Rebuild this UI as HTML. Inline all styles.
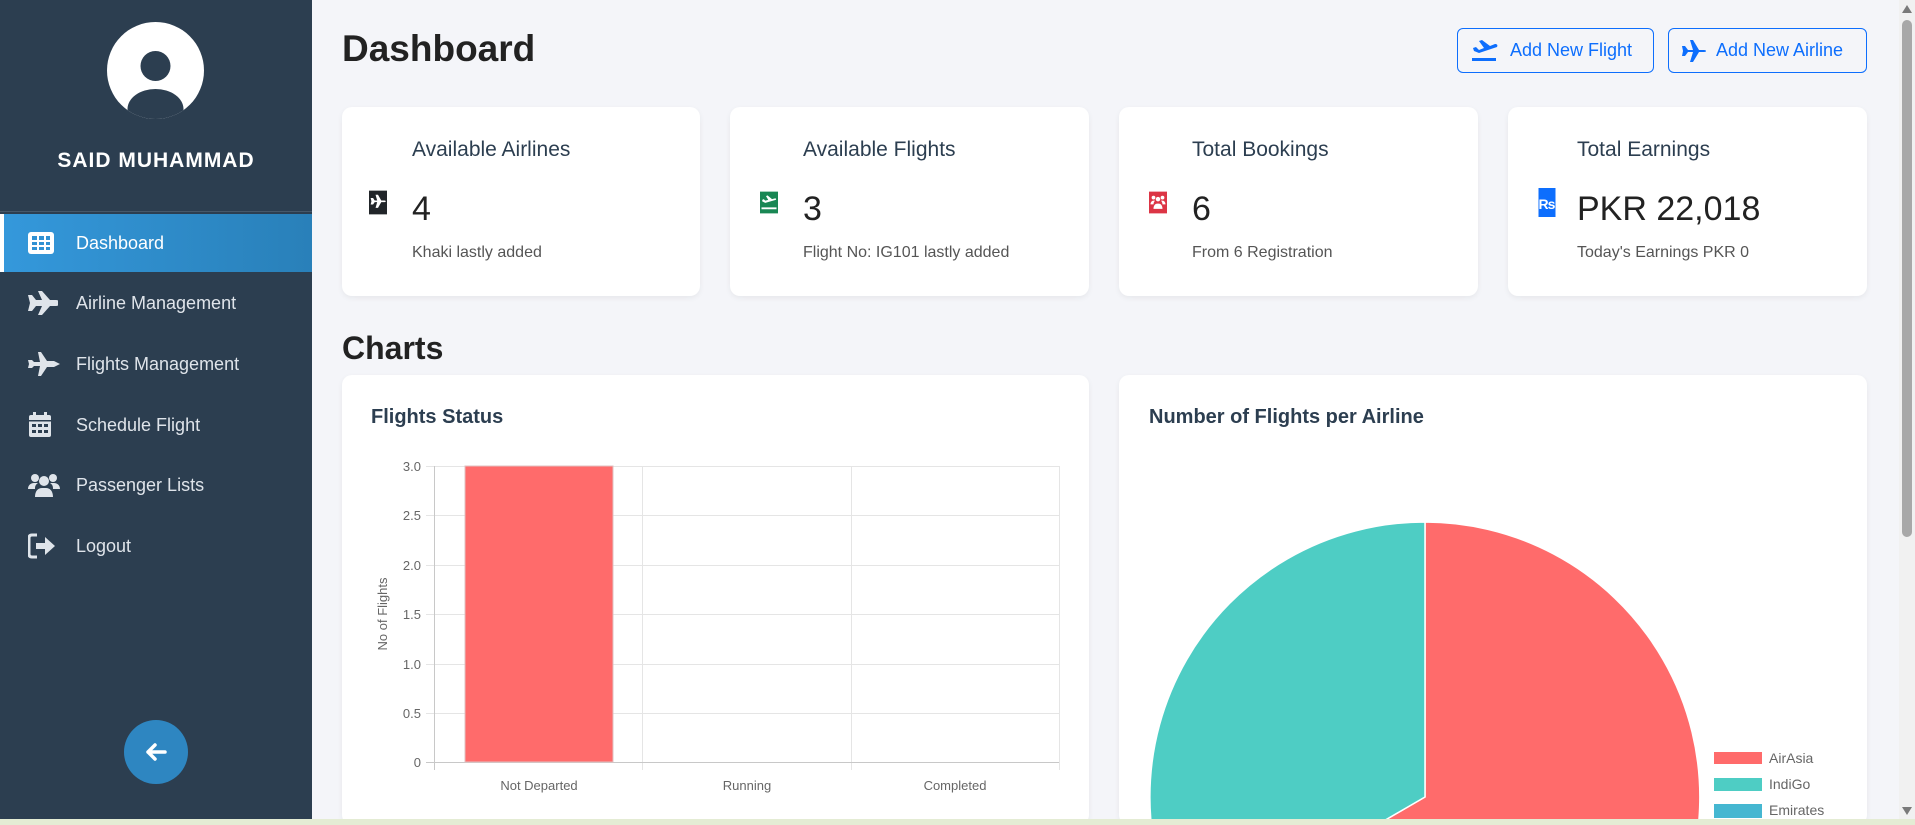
<!DOCTYPE html>
<html><head><meta charset="utf-8"><style>
*{box-sizing:border-box;margin:0;padding:0}
html,body{width:1915px;height:825px;overflow:hidden}
body{background:#f4f5f9;font-family:"Liberation Sans",sans-serif;position:relative}
.sb{position:absolute;left:0;top:0;width:312px;height:825px;background:#2c3e50}
.av{position:absolute;left:107px;top:22px;width:97px;height:97px;border-radius:50%;background:#fff;overflow:hidden}
.name{position:absolute;left:0;width:312px;top:149px;text-align:center;color:#fff;font-weight:bold;font-size:21px;letter-spacing:1px}
.sep{position:absolute;left:0;top:211px;width:312px;height:1px;background:#46586a}
.mi{position:absolute;left:0;width:312px;height:58px;color:#dfe4ea;font-size:18px;display:flex;align-items:center}
.mi svg{position:absolute;left:28px}
.mi span{position:absolute;left:76px}
.act{background:linear-gradient(90deg,#3498db,#2980b9);color:#fff;border-left:4px solid #fff}
.act span{left:72px}
.back{position:absolute;left:124px;top:720px;width:64px;height:64px;border-radius:50%;background:#2e86c1;}
h1{position:absolute;left:342px;top:28px;font-size:37px;font-weight:bold;color:#222}
.btn{position:absolute;top:28px;height:45px;border:1px solid #0d6efd;border-radius:6px;color:#0d6efd;font-size:18px;display:flex;align-items:center;background:transparent}
.card{position:absolute;background:#fff;border-radius:10px;box-shadow:0 2px 6px rgba(0,0,0,.06)}
.ct{position:absolute;left:70px;top:31px;font-size:21px;color:#2c3e50}
.cn{position:absolute;left:70px;top:83px;font-size:34px;color:#222}
.cs{position:absolute;left:70px;top:137px;font-size:16px;color:#555}
.ic{position:absolute;left:28px;top:81px;width:18px;height:29px}
h2{position:absolute;left:342px;top:330px;font-size:32px;font-weight:bold;color:#222}
.chtitle{position:absolute;top:406px;font-size:20px;font-weight:bold;color:#2c3e50}
</style></head><body>
<div class="sb">
 <div class="av"><svg width="97" height="97"><circle cx="48.5" cy="44" r="15" fill="#2c3e50"/><ellipse cx="48.5" cy="87" rx="28" ry="20" fill="#2c3e50"/></svg></div>
 <div class="name">SAID MUHAMMAD</div>
 <div class="sep"></div>
 <div class="mi act" style="top:214px"><svg width="26" height="22" viewBox="0 0 26 22" style="left:24px"><rect x="0" y="0" width="26" height="22" rx="3" fill="#fff"/><g fill="#3091d3"><rect x="4" y="4" width="5" height="4"/><rect x="11" y="4" width="5" height="4"/><rect x="18" y="4" width="4" height="4"/><rect x="4" y="10" width="5" height="3"/><rect x="11" y="10" width="5" height="3"/><rect x="18" y="10" width="4" height="3"/><rect x="4" y="15" width="5" height="3"/><rect x="11" y="15" width="5" height="3"/><rect x="18" y="15" width="4" height="3"/></g></svg><span>Dashboard</span></div>
 <div class="mi" style="top:274px"><svg width="30" height="24" viewBox="0 0 30 24"><path d="M0 4l4 0 4 5 6 0-4-9h4l8 9h6c2 0 3 1 3 3s-1 3-3 3h-6l-8 9h-4l4-9h-6l-4 5h-4l2-8z" fill="#dfe4ea"/></svg><span>Airline Management</span></div>
 <div class="mi" style="top:335px"><svg width="32" height="24" viewBox="0 0 32 24"><path d="M0 8h4l2 2h6l-2-10h3l6 9h7l6 3-6 3h-7l-6 9h-3l2-10h-6l-2 2h-4l1-4z" fill="#dfe4ea"/></svg><span>Flights Management</span></div>
 <div class="mi" style="top:396px"><svg width="24" height="26" viewBox="0 0 24 26"><rect x="1" y="3" width="22" height="22" rx="2" fill="#dfe4ea"/><rect x="5" y="0" width="3" height="6" fill="#dfe4ea"/><rect x="16" y="0" width="3" height="6" fill="#dfe4ea"/><rect x="1" y="8" width="22" height="1.5" fill="#2c3e50"/><g fill="#2c3e50"><rect x="4" y="12" width="4" height="3"/><rect x="10" y="12" width="4" height="3"/><rect x="16" y="12" width="4" height="3"/><rect x="4" y="18" width="4" height="3"/><rect x="10" y="18" width="4" height="3"/><rect x="16" y="18" width="4" height="3"/></g></svg><span>Schedule Flight</span></div>
 <div class="mi" style="top:456px"><svg width="32" height="24" viewBox="0 0 32 24"><circle cx="7" cy="5" r="4" fill="#dfe4ea"/><circle cx="25" cy="5" r="4" fill="#dfe4ea"/><circle cx="16" cy="8" r="5" fill="#dfe4ea"/><path d="M0 16c0-4 3-6 6-6h4c-3 2-3 4-3 6z M32 16c0-4-3-6-6-6h-4c3 2 3 4 3 6z M7 24c0-6 3-9 7-9h4c4 0 7 3 7 9z" fill="#dfe4ea"/></svg><span>Passenger Lists</span></div>
 <div class="mi" style="top:517px"><svg width="28" height="26" viewBox="0 0 28 26"><path d="M9 2H4C2 2 1 3 1 5v16c0 2 1 3 3 3h5" stroke="#dfe4ea" stroke-width="3" fill="none"/><path d="M8 10h9V4l10 9-10 9v-6H8z" fill="#dfe4ea"/></svg><span>Logout</span></div>
 <div class="back"><svg width="64" height="64"><path d="M24 32h17M31 25l-7 7 7 7" stroke="#fff" stroke-width="3.5" fill="none" stroke-linecap="round" stroke-linejoin="round"/></svg></div>
</div>
<h1>Dashboard</h1>
<div class="btn" style="left:1457px;width:197px"><svg width="26" height="22" viewBox="0 0 26 22" style="margin-left:14px;margin-right:12px"><path d="M1 8l3 -1 3 3 5-2-5-7 3-1 8 6 5-2c2 0 3 1 2 3l-18 6-5-2z" fill="#0d6efd"/><rect x="0" y="18" width="24" height="3" fill="#0d6efd"/></svg>Add New Flight</div>
<div class="btn" style="left:1668px;width:199px"><svg width="24" height="24" viewBox="0 0 24 24" style="margin-left:13px;margin-right:10px"><path d="M0 7h3l3 4h5L8 1h3l6 10h5c1.5 0 2 .5 2 1s-.5 1-2 1h-5l-6 10H8l3-10H6l-3 4H0l1-5z" fill="#0d6efd"/></svg>Add New Airline</div>

<div class="card" style="left:342px;top:107px;width:358px;height:189px"><div class="ct">Available Airlines</div><div class="cn">4</div><div class="cs">Khaki lastly added</div><svg class="ic" style="left:27px" width="22" height="29" viewBox="0 0 22 29"><rect width="22" height="29" fill="#212529"/><path d="M2 9h3l2 3h3L8 5h3l4 7h4c2 0 2 2 0 2h-4l-4 7H8l2-7H7l-2 3H2l1-4z" fill="#fff"/></svg></div>
<div class="card" style="left:730px;top:107px;width:359px;height:189px"><div class="ct" style="left:73px">Available Flights</div><div class="cn" style="left:73px">3</div><div class="cs" style="left:73px">Flight No: IG101 lastly added</div><svg class="ic" style="left:30px" width="24" height="29" viewBox="0 0 24 29"><rect width="24" height="29" fill="#198754"/><path d="M3 11l2-1 2 2 4-1-3-5 2-1 6 5 4-1c1.5 0 2 1 1 2l-14 4-4-2z" fill="#fff"/><rect x="2" y="21" width="20" height="2.5" fill="#fff"/></svg></div>
<div class="card" style="left:1119px;top:107px;width:359px;height:189px"><div class="ct" style="left:73px">Total Bookings</div><div class="cn" style="left:73px">6</div><div class="cs" style="left:73px">From 6 Registration</div><svg class="ic" style="left:30px" width="24" height="29" viewBox="0 0 24 29"><rect width="24" height="29" fill="#dc3545"/><circle cx="6" cy="8" r="2.5" fill="#fff"/><circle cx="18" cy="8" r="2.5" fill="#fff"/><circle cx="12" cy="10" r="3" fill="#fff"/><path d="M2 17c0-3 2-5 4-5h2c-1 1-2 3-2 5z M22 17c0-3-2-5-4-5h-2c1 1 2 3 2 5z M6 23c0-4 2-7 5-7h2c3 0 5 3 5 7z" fill="#fff"/></svg></div>
<div class="card" style="left:1508px;top:107px;width:359px;height:189px"><div class="ct" style="left:69px">Total Earnings</div><div class="cn" style="left:69px">PKR 22,018</div><div class="cs" style="left:69px">Today's Earnings PKR 0</div><svg class="ic" style="left:30px" width="17" height="29" viewBox="0 0 17 29"><rect width="17" height="29" fill="#0d6efd"/><text x="0" y="21" font-family="Liberation Sans" font-weight="bold" font-size="14" fill="#fff" letter-spacing="-1">Rs</text></svg></div>

<h2>Charts</h2>
<div class="card" style="left:342px;top:375px;width:747px;height:450px"></div>
<div class="card" style="left:1119px;top:375px;width:748px;height:450px"></div>
<div class="chtitle" style="left:371px">Flights Status</div>
<div class="chtitle" style="left:1149px">Number of Flights per Airline</div>
<svg style="position:absolute;left:0;top:0" width="1915" height="825">
 <g stroke="#e5e5e5" stroke-width="1">
  <line x1="426" y1="466.5" x2="1059" y2="466.5"/><line x1="426" y1="515.5" x2="1059" y2="515.5"/><line x1="426" y1="565.5" x2="1059" y2="565.5"/><line x1="426" y1="614.5" x2="1059" y2="614.5"/><line x1="426" y1="664.5" x2="1059" y2="664.5"/><line x1="426" y1="713.5" x2="1059" y2="713.5"/>
  <line x1="642.5" y1="466" x2="642.5" y2="770"/><line x1="851.5" y1="466" x2="851.5" y2="770"/><line x1="1059.5" y1="466" x2="1059.5" y2="770"/>
 </g>
 <g stroke="#c8c8c8"><line x1="434.5" y1="466" x2="434.5" y2="770"/><line x1="426" y1="762.5" x2="1059" y2="762.5"/></g>
 <rect x="465" y="466" width="148" height="296" fill="#ff6b6b" stroke="#e0c0c0" stroke-width="1"/>
 <g font-family="Liberation Sans" font-size="13" fill="#666" text-anchor="end">
  <text x="421" y="471">3.0</text><text x="421" y="520">2.5</text><text x="421" y="570">2.0</text><text x="421" y="619">1.5</text><text x="421" y="669">1.0</text><text x="421" y="718">0.5</text><text x="421" y="767">0</text>
 </g>
 <g font-family="Liberation Sans" font-size="13" fill="#666" text-anchor="middle">
  <text x="539" y="790">Not Departed</text><text x="747" y="790">Running</text><text x="955" y="790">Completed</text>
  <text transform="translate(387,614) rotate(-90)">No of Flights</text>
 </g>
 <clipPath id="c"><rect x="1119" y="375" width="748" height="444"/></clipPath>
 <g clip-path="url(#c)">
  <path d="M1425 797 L1425 522 A275 275 0 1 1 1187 935 Z" fill="#ff6b6b" stroke="#fff" stroke-width="1.5"/>
  <path d="M1425 797 L1187 935 A275 275 0 0 1 1425 522 Z" fill="#4ecdc4" stroke="#fff" stroke-width="1.5"/>
 </g>
 <rect x="1714" y="752" width="48" height="12" fill="#ff6b6b"/><rect x="1714" y="778" width="48" height="13" fill="#4ecdc4"/><rect x="1714" y="804" width="48" height="14" fill="#45b7d1"/>
 <g font-family="Liberation Sans" font-size="14" fill="#666"><text x="1769" y="763">AirAsia</text><text x="1769" y="789">IndiGo</text><text x="1769" y="815">Emirates</text></g>
 <rect x="1899" y="0" width="16" height="825" fill="#f1f1f1"/>
 <rect x="1902" y="20" width="10" height="517" rx="5" fill="#a8a8a8"/>
 <path d="M1902 13l5-8 5 8z" fill="#7a7a7a"/><path d="M1902 807l5 8 5-8z" fill="#7a7a7a"/>
 <rect x="0" y="819" width="1915" height="6" fill="#e4ecd4"/>
</svg>
</body></html>
